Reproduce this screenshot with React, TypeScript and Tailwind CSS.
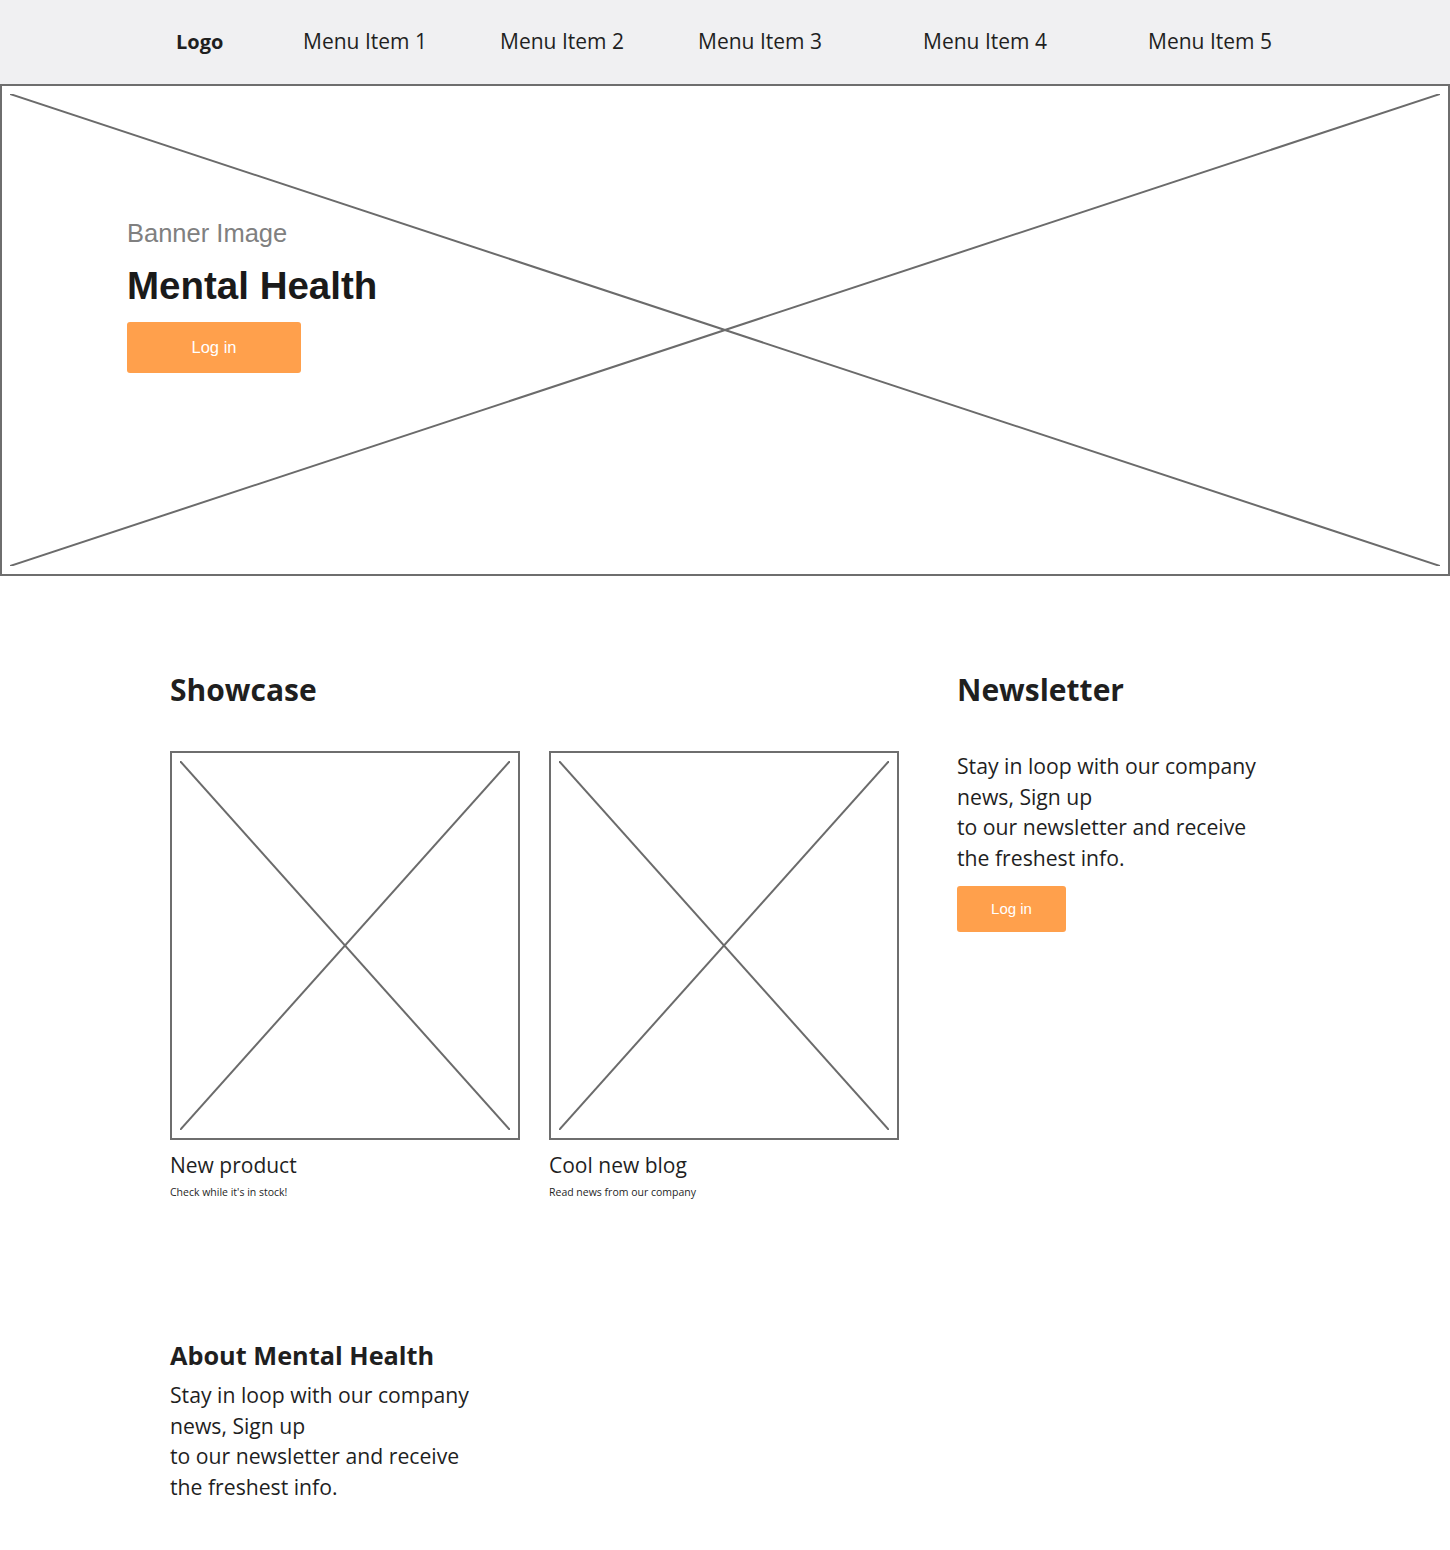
const Cross = () => (
  <svg className="absolute inset-0 h-full w-full" preserveAspectRatio="none" viewBox="0 0 100 100">
    <line x1="0" y1="0" x2="100" y2="100" stroke="#6b6b6b" strokeWidth="2" vectorEffect="non-scaling-stroke" />
    <line x1="100" y1="0" x2="0" y2="100" stroke="#6b6b6b" strokeWidth="2" vectorEffect="non-scaling-stroke" />
  </svg>
);

const Placeholder = ({ className = "" }: { className?: string }) => (
  <div className={`relative border-2 border-[#6e6e6e] bg-white ${className}`}>
    <div className="absolute inset-[8px]">
      <Cross />
    </div>
  </div>
);

const menu = [
  { label: "Menu Item 1", w: "w-[197px]" },
  { label: "Menu Item 2", w: "w-[198px]" },
  { label: "Menu Item 3", w: "w-[225px]" },
  { label: "Menu Item 4", w: "w-[225px]" },
  { label: "Menu Item 5", w: "w-[200px]" },
];

const blurb = (
  <>
    Stay in loop with our company news, Sign up
    <br />
    to our newsletter and receive the freshest info.
  </>
);

export default function App() {
  return (
    <div className="min-h-[1550px] w-[1450px] bg-white font-['Open_Sans',sans-serif] text-[#1f1f1f]">
      {/* HEADER */}
      <header className="flex h-[84px] items-center bg-[#f0f0f2] pl-[176px] text-[21px]">
        <span className="w-[127px] text-[20px] font-bold">Logo</span>
        {menu.map((m) => (
          <a key={m.label} className={m.w}>
            {m.label}
          </a>
        ))}
      </header>

      {/* BANNER */}
      <section className="relative h-[492px] border-2 border-[#6e6e6e]">
        <div className="absolute inset-[8px]">
          <Cross />
        </div>
        <div className="relative flex flex-col items-start pl-[125px] pt-[132px] font-['Liberation_Sans',Arial,sans-serif]">
          <p className="text-[25.5px] leading-[30px] text-[#808080]">Banner Image</p>
          <h1 className="mt-[16px] text-[38.5px] font-bold leading-[44px] text-[#1a1a1a]">Mental Health</h1>
          <button className="mt-[14px] h-[51px] w-[174px] rounded-[3px] bg-[#ffa04c] text-[16.5px] text-white">
            Log in
          </button>
        </div>
      </section>

      {/* SHOWCASE + NEWSLETTER */}
      <section className="flex gap-[58px] pl-[170px] pt-[94px]">
        <div className="w-[729px]">
          <h2 className="text-[30px] font-bold leading-[40px]">Showcase</h2>
          <div className="mt-[41px] flex gap-[29px]">
            <div className="w-[350px]">
              <Placeholder className="h-[389px] w-[350px]" />
              <p className="mt-[11px] text-[21px] leading-[28px]">New product</p>
              <p className="mt-[6px] text-[10.5px] leading-[14px]">Check while it's in stock!</p>
            </div>
            <div className="w-[350px]">
              <Placeholder className="h-[389px] w-[350px]" />
              <p className="mt-[11px] text-[21px] leading-[28px]">Cool new blog</p>
              <p className="mt-[6px] text-[10.5px] leading-[14px]">Read news from our company</p>
            </div>
          </div>
        </div>

        <div className="w-[330px]">
          <h2 className="text-[30px] font-bold leading-[40px]">Newsletter</h2>
          <p className="mt-[41px] w-[310px] text-[21.2px] leading-[30.5px]">{blurb}</p>
          <button className="mt-[13px] h-[46px] w-[109px] rounded-[3px] bg-[#ffa04c] font-['Liberation_Sans',Arial,sans-serif] text-[15px] text-white">
            Log in
          </button>
        </div>
      </section>

      {/* ABOUT */}
      <section className="pl-[170px] pt-[139px]">
        <h3 className="text-[25.3px] font-bold leading-[34px]">About Mental Health</h3>
        <p className="mt-[8px] w-[310px] text-[21.2px] leading-[30.5px]">{blurb}</p>
      </section>
    </div>
  );
}
